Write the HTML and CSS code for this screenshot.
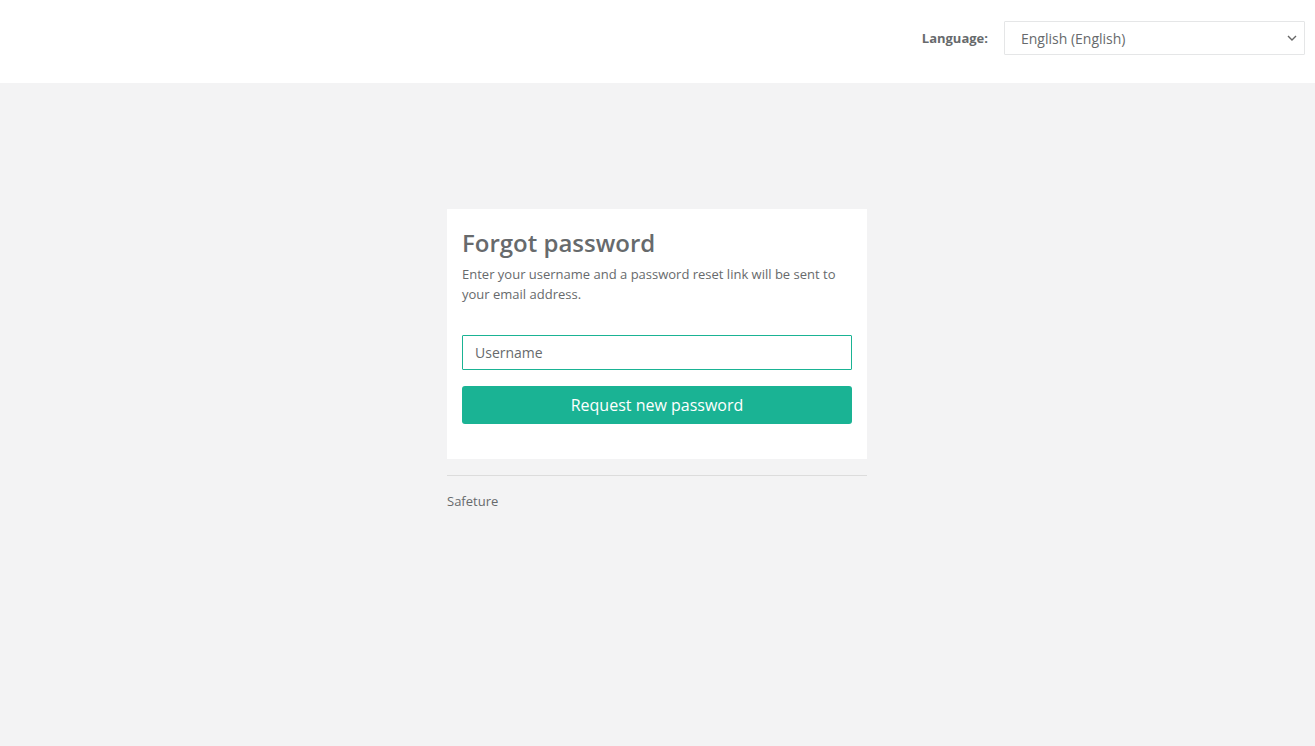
FILE: index.html
```html
<!DOCTYPE html>
<html lang="en">
<head>
  <meta charset="UTF-8" />
  <meta name="viewport" content="width=device-width, initial-scale=1" />
  <title>Forgot password</title>
  <link rel="stylesheet" href="styles.css">
</head>
<body>
  <header class="topbar">
    <label class="lang-label" for="lang">Language:</label>
    <div class="lang-select">
      <select id="lang">
        <option>English (English)</option>
        <option>Svenska (Swedish)</option>
      </select>
      <svg class="chevron" width="10" height="6" viewBox="0 0 10 6"><path d="M1 1l4 4 4-4" fill="none" stroke="#666" stroke-width="1.4"/></svg>
    </div>
  </header>

  <main class="page">
    <div class="wrap">
      <div class="card">
        <h2>Forgot password</h2>
        <p class="intro">Enter your username and a password reset link will be sent to your email address.</p>
        <input type="text" class="field" placeholder="Username" />
        <button class="btn">Request new password</button>
      </div>
      <hr class="sep" />
      <div class="brand">Safeture</div>
    </div>
  </main>
</body>
</html>
```

FILE: styles.css
```css
html, body {
  margin: 0;
  height: 100%;
}
body {
  font-family: 'Open Sans', 'Liberation Sans', sans-serif;
  font-size: 13px;
  color: #676a6c;
  background: #f3f3f4;
  display: flex;
  flex-direction: column;
}
.topbar {
  background: #fff;
  height: 83px;
  display: flex;
  align-items: flex-start;
  justify-content: flex-end;
  padding: 21px 10px 0 0;
  gap: 16px;
  box-sizing: border-box;
}
.lang-label {
  font-weight: 700;
  font-size: 13px;
  line-height: 34px;
  color: #676a6c;
}
.lang-select {
  position: relative;
  width: 301px;
}
.lang-select select {
  appearance: none;
  -webkit-appearance: none;
  width: 100%;
  height: 34px;
  border: 1px solid #e5e6e7;
  border-radius: 1px;
  background: #fff;
  font-family: inherit;
  font-size: 14px;
  color: #676a6c;
  padding: 0 30px 0 16px;
  outline: none;
}
.chevron {
  position: absolute;
  right: 8px;
  top: 14px;
  pointer-events: none;
}
.page {
  flex: 1;
  display: flex;
  justify-content: center;
  padding: 126px 1px 0 0;
}
.wrap {
  width: 420px;
}
.card {
  background: #fff;
  padding: 20px 15px 35px;
}
.card h2 {
  margin: 0;
  font-size: 24px;
  line-height: 28px;
  font-weight: 600;
  color: #676a6c;
}
.intro {
  margin: 7px 0 31px;
  line-height: 20px;
}
.field {
  display: block;
  width: 100%;
  box-sizing: border-box;
  height: 35px;
  border: 1px solid #1ab394;
  border-radius: 1px;
  padding: 0 12px;
  font-family: inherit;
  font-size: 14px;
  color: #676a6c;
  outline: none;
  margin-bottom: 16px;
}
.field::placeholder {
  color: #676a6c;
}
.btn {
  display: block;
  width: 100%;
  height: 38px;
  border: none;
  border-radius: 3px;
  background: #1ab394;
  color: #fff;
  font-family: inherit;
  font-size: 16px;
  cursor: pointer;
}
.sep {
  border: none;
  border-top: 1px solid #dcdcdc;
  margin: 16px 0 0;
}
.brand {
  margin-top: 15px;
  line-height: 20px;
}
```
